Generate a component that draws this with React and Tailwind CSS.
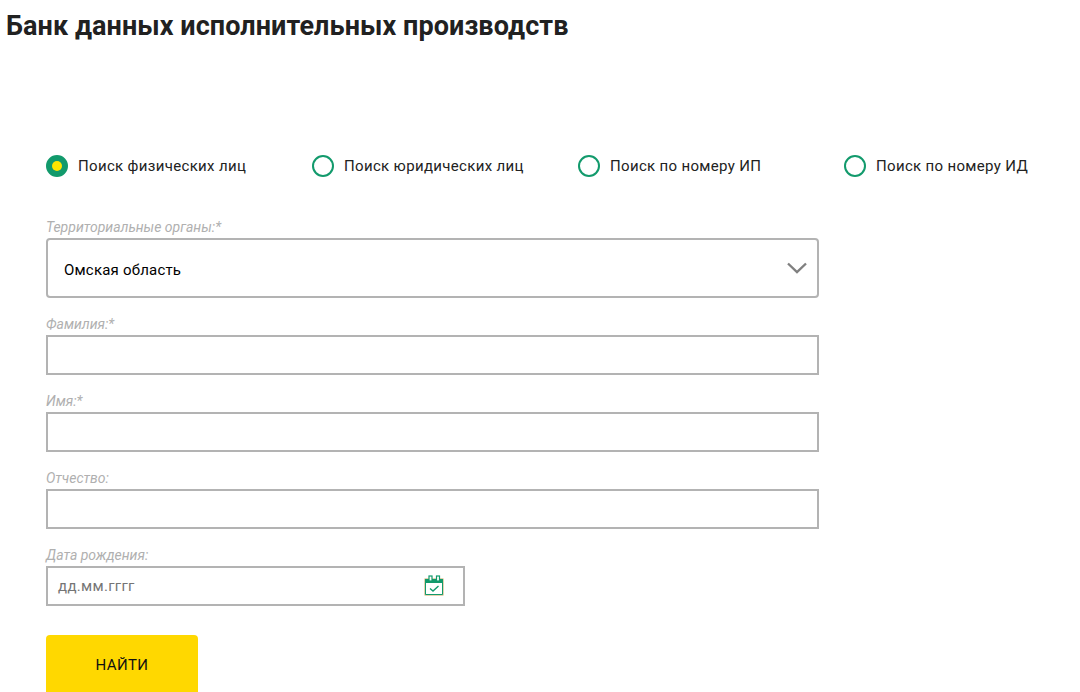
import { useState } from 'react';

const searchTypes = [
    'Поиск физических лиц',
    'Поиск юридических лиц',
    'Поиск по номеру ИП',
    'Поиск по номеру ИД',
];

function Label({ children }) {
    return <div className="h-[13px] text-[14px] leading-[16px] italic text-[#b0b0b0] mb-[6px]">{children}</div>;
}

function TextField({ label }) {
    return (
        <div className="mb-[18px]">
            <Label>{label}</Label>
            <input type="text" className="block w-[773px] h-[40px] bg-white border-2 border-[#b3b3b3] outline-none" />
        </div>
    );
}

export default function App() {
    const [active, setActive] = useState(0);

    return (
        <div className="h-[692px] overflow-hidden bg-white text-[#222] font-['Roboto',sans-serif]">
            <h1 className="pl-[6px] pt-[11px] h-[155px] m-0 text-[27px] leading-[30px] font-bold text-[#212121] tracking-[0.08px]">
                Банк данных исполнительных производств
            </h1>

            <div className="pl-[46px] grid grid-cols-[266px_266px_266px_236px] h-[22px]">
                {searchTypes.map((name, i) => (
                    <button key={name} onClick={() => setActive(i)} className="flex items-center gap-[10px] text-[15px] leading-[22px] text-[#222] tracking-[0.33px] text-left whitespace-nowrap">
                        <span className={`flex items-center justify-center w-[22px] h-[22px] rounded-full border-2 border-[#129a6c] ${i === active ? 'bg-[#129a6c]' : 'bg-white'}`}>
                            {i === active && <span className="w-[10px] h-[10px] rounded-full bg-[#ffe600]" />}
                        </span>
                        {name}
                    </button>
                ))}
            </div>

            <form className="pl-[46px] pt-[42px]">
                <div className="mb-[18px]">
                    <Label>Территориальные органы:*</Label>
                    <div className="flex items-center justify-between w-[773px] h-[60px] pl-[16px] pr-[10px] pt-[5px] border-2 border-[#b3b3b3] rounded-[4px] text-[15px] text-black tracking-[0.2px]">
                        Омская область
                        <svg className="-mt-[5px]" width="20" height="12" viewBox="0 0 20 12" fill="none" stroke="#808080" strokeWidth="2.4">
                            <path d="M1 1.5 L10 10 L19 1.5" />
                        </svg>
                    </div>
                </div>

                <TextField label="Фамилия:*" />
                <TextField label="Имя:*" />
                <TextField label="Отчество:" />

                <div className="mb-[29px]">
                    <Label>Дата рождения:</Label>
                    <div className="flex items-center justify-between w-[419px] h-[40px] pl-[10px] pr-[19px] border-2 border-[#b3b3b3] text-[15px] text-[#757575] tracking-[0.3px]">
                        дд.мм.гггг
                        <svg className="-mt-[2px]" width="20" height="21" viewBox="0 0 20 21" fill="none">
                            <rect x="1" y="4" width="18" height="16" fill="#fff" stroke="#c9a860" strokeWidth="1" />
                            <rect x="1" y="4" width="18" height="4" fill="#129a6c" />
                            <path d="M1.5 8 V19.5 H18.5 V8" stroke="#129a6c" strokeWidth="1" />
                            <rect x="5" y="1" width="3" height="5" fill="#fff" stroke="#129a6c" strokeWidth="1.2" />
                            <rect x="12.5" y="1" width="3" height="5" fill="#fff" stroke="#129a6c" strokeWidth="1.2" />
                            <path d="M6 13.5 L9 16 L14.5 11" stroke="#129a6c" strokeWidth="1.4" />
                        </svg>
                    </div>
                </div>

                <button type="button" className="block w-[152px] h-[60px] bg-[#ffd800] rounded-[4px] text-[15px] text-[#111] tracking-[0.4px]">
                    НАЙТИ
                </button>
            </form>
        </div>
    );
}
